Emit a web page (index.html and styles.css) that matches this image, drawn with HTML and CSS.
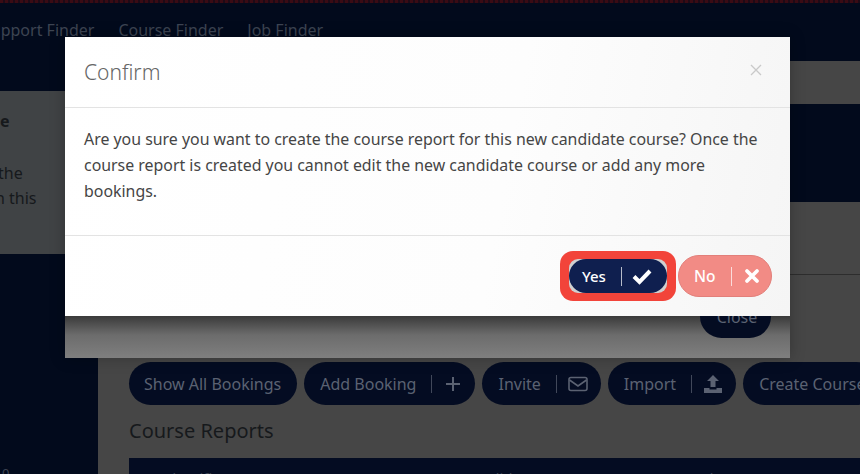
FILE: index.html
```html
<!DOCTYPE html>
<html lang="en">
<head>
<meta charset="utf-8">
<title>Confirm</title>
<link rel="stylesheet" href="styles.css">
</head>
<body>
<div class="page">
  <div class="topline"></div>
  <nav class="nav">
    <a>Support Finder</a>
    <a>Course Finder</a>
    <a>Job Finder</a>
  </nav>
  <div class="layout">
    <aside class="side">
      <div class="side-panel">
        <p class="side-title">e</p>
        <p class="side-the">the</p>
        <p class="side-this">n this</p>
      </div>
      <div class="side-foot">0</div>
    </aside>
    <main class="main">
      <div class="band-grey"></div>
      <div class="band-dark"></div>
      <div class="content">
        <div class="close-row"><span class="pill close-pill">Close</span></div>
        <div class="actions">
          <span class="pill pill-text">Show All Bookings</span>
          <span class="pill pill-add">Add Booking<i class="sep"></i><svg class="ic" viewBox="0 0 20 20"><path d="M10 3v14M3 10h14" fill="none" stroke="currentColor" stroke-width="2"/></svg></span>
          <span class="pill">Invite<i class="sep"></i><svg class="ic" viewBox="0 0 20 20"><rect x="1" y="3.500" width="18" height="13" rx="2" fill="none" stroke="currentColor" stroke-width="1.600"/><path d="M1.500 6l8.500 6 8.500-6" fill="none" stroke="currentColor" stroke-width="1.600"/></svg></span>
          <span class="pill">Import<i class="sep"></i><svg class="ic" viewBox="0 0 20 20"><path d="M10 1l6 6h-3.500v6h-5V7H4z M1 14h5.500v1.500h7V14H19v5H1z" fill="currentColor"/></svg></span>
          <span class="pill">Create Course</span>
        </div>
        <h2 class="reports">Course Reports</h2>
        <div class="table-head">
          <span class="col-a">Identifier</span>
          <span class="col-b">Name</span>
          <span class="col-c">Candidates</span>
          <span class="col-d">Created</span>
          <span class="col-e">Status</span>
        </div>
      </div>
    </main>
  </div>

  <div class="modal">
    <section class="dialog">
      <header class="dialog-head">
        <h1 class="dialog-title">Confirm</h1>
        <svg class="dialog-x" viewBox="0 0 12 12"><path d="M1 1l10 10M11 1L1 11" fill="none" stroke="currentColor" stroke-width="1.300"/></svg>
      </header>
      <div class="dialog-body">
        <p>Are you sure you want to create the course report for this new candidate course? Once the course report is created you cannot edit the new candidate course or add any more bookings.</p>
      </div>
      <footer class="dialog-foot">
        <span class="highlight">
          <span class="hole">
            <span class="btn btn-yes">Yes<i class="sep"></i><svg class="ic" viewBox="0 0 20 20"><path d="M2 10.500l5.500 5.500L18 5" fill="none" stroke="currentColor" stroke-width="4"/></svg></span>
          </span>
        </span>
        <span class="btn btn-no">No<i class="sep"></i><svg class="ic" viewBox="0 0 20 20"><path d="M5 5l10 10M15 5L5 15" fill="none" stroke="currentColor" stroke-width="3.800" stroke-linecap="round"/></svg></span>
      </footer>
    </section>
    <div class="modal-shade"></div>
  </div>
</div>
</body>
</html>
```
FILE: styles.css
```css
* { box-sizing: border-box; }
html, body { margin: 0; padding: 0; }
body { font-family: "Noto Sans", "Open Sans", sans-serif; background: #020a1c; }
.page { position: relative; width: 860px; height: 474px; overflow: hidden; background: #020a1c; display: flex; flex-direction: column; }
.topline { height: 3px; flex: none; background: repeating-linear-gradient(90deg, #3a0b14 0 3px, #1c0a16 3px 5px); }
.nav { height: 58px; flex: none; display: flex; gap: 24px; padding-top: 17px; margin-left: -18px; font-size: 16px; line-height: 20px; color: #3d4452; }
.layout { flex: 1; display: flex; min-height: 0; }
.side { width: 98px; flex: none; padding-top: 30px; display: flex; flex-direction: column; }
.side-panel { height: 163px; width: 100%; background: #404345; color: #16191c; font-size: 16px; padding-top: 20px; overflow: hidden; }
.side-panel p { margin: 0; line-height: 20px; }
.side-title { font-weight: 700; }
.side-panel .side-the { margin: 32px 0 0 -2px; }
.side-panel .side-this { margin: 5px 0 0 -5px; }
.side-foot { margin-top: auto; height: 8px; padding-left: 2px; font-size: 13px; line-height: 14px; color: #3d4452; overflow: hidden; }
.main { flex: 1; min-width: 0; display: flex; flex-direction: column; }
.band-grey { height: 43px; flex: none; background: #464646; }
.band-dark { height: 98px; flex: none; background: #020a1c; }
.content { flex: 1; background: #464646; padding: 0 0 0 31px; min-width: 0; overflow: hidden; }
.close-row { height: 161px; display: flex; justify-content: flex-end; align-items: flex-end; padding-right: 89px; padding-bottom: 25px; background: linear-gradient(#464646 72px, #2d2d2d 72px, #2d2d2d 73px, #464646 73px); margin: 0 0 0 -31px; }
.close-pill { position: relative; z-index: 2; min-width: 71px; padding: 0 14px; justify-content: center; }
.actions { display: flex; gap: 7px; margin-top: -1px; white-space: nowrap; }
.pill { display: inline-flex; align-items: center; height: 43px; padding: 0 13px 0 16px; border-radius: 22px; background: #040c22; color: #5b6272; font-size: 16px; flex: none; }
.pill-text { padding: 0 16px 0 15px; }
.pill-add { padding-right: 12px; }
.sep { display: inline-block; width: 1px; height: 18px; background: currentColor; margin: 0 11px 0 15px; opacity: .7; }
.ic { width: 20px; height: 20px; flex: none; }
.reports { margin: 12px 0 0; font-size: 20px; line-height: 28px; font-weight: 400; color: #16191c; }
.table-head { margin-top: 13px; height: 40px; background: #040c22; color: #3d4452; font-size: 15px; padding-top: 10px; display: flex; }
.table-head span { flex: none; }
.col-a { width: 212px; padding-left: 33px; }
.col-b { width: 122px; }
.col-c { width: 195px; }
.col-d { width: 155px; }
.modal { position: absolute; left: 65px; top: 37px; width: 725px; height: 321px; display: flex; flex-direction: column; box-shadow: 0 0 14px rgba(0,0,0,.25); }
.dialog { position: relative; z-index: 3; height: 279px; flex: none; background: linear-gradient(100deg, #fff 0%, #fdfdfd 60%, #f5f5f5 100%); display: flex; flex-direction: column; color: #454545; }
.dialog-head { height: 71px; flex: none; display: flex; justify-content: space-between; align-items: center; padding: 0 28px 0 19px; border-bottom: 1px solid #e3e3e3; }
.dialog-title { margin: 0; font-size: 21px; font-weight: 300; color: #666; line-height: 28px; }
.dialog-x { width: 12px; height: 12px; color: #c9c9c9; margin-bottom: 4px; }
.dialog-body { height: 128px; flex: none; padding: 18px 19px 0; border-bottom: 1px solid #e3e3e3; font-size: 15.900px; line-height: 26px; }
.dialog-body p { margin: 0; }
.dialog-foot { flex: 1; display: flex; align-items: center; justify-content: flex-end; gap: 2px; padding: 0 18px 0 0; }
.highlight { display: flex; padding: 8px 9px; background: #f2443a; border-radius: 13px; }
.hole { display: flex; background: #d0d0d0; border-radius: 9px; }
.btn { display: inline-flex; align-items: center; border-radius: 21px; font-size: 15.500px; font-weight: 500; color: #fff; }
.btn-yes { height: 34px; width: 98px; padding-left: 13px; font-size: 15px; background: #0f1f4f; }
.btn-no { height: 42px; width: 94px; padding-left: 15px; background: #f28b85; border: 1px solid #e27f7a; }
.btn .sep { height: 19px; margin: 0 10px 0 15px; }
.modal-shade { position: relative; z-index: 1; flex: 1; background: linear-gradient(#3a3a3a, #6c6c6c 45%, #7f7f7f); }
```
